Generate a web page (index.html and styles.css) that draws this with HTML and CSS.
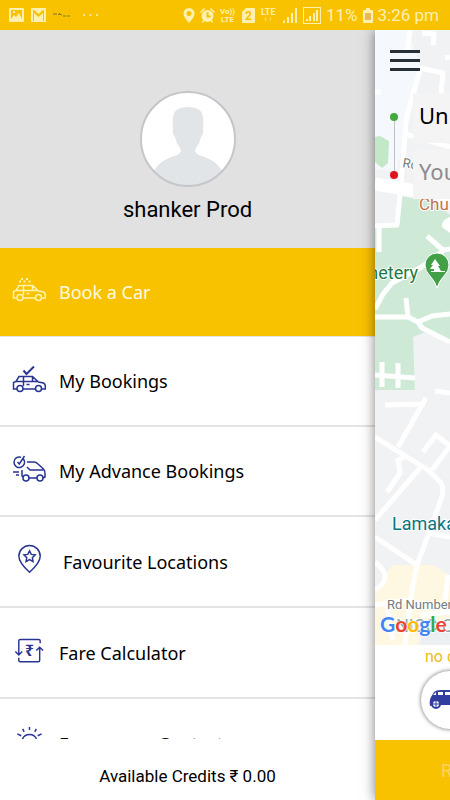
FILE: index.html
```html
<!DOCTYPE html>
<html lang="en">
<head>
<meta charset="utf-8">
<meta name="viewport" content="width=device-width, initial-scale=1">
<title>Menu</title>
<link rel="stylesheet" href="styles.css">
</head>
<body>
<svg class="defs" aria-hidden="true">
  <symbol id="car" viewBox="0 0 34 32">
    <path d="M5 22H1.500V15.500L4 14.500 7 9.500H20.500L26.500 15 31.500 16Q33.300 17 33.300 19V22H29.500M11 22H23.500M4 14.500H26.500M11.500 9.500V19M20.500 9.500V14.500M14.500 17.500H17.500"/>
    <circle cx="8" cy="21.500" r="3"/><circle cx="26.500" cy="21.500" r="3"/>
  </symbol>
</svg>
<div class="phone">
  <header class="status">
    <div class="status-group">
      <svg width="15" height="14" viewBox="0 0 15 14"><path fill-rule="evenodd" d="M1 0H14Q15 0 15 1V13Q15 14 14 14H1Q0 14 0 13V1Q0 0 1 0ZM2 11 5 7 7 9 10 5 13 11V2H2ZM4 3H6V5H4Z"/></svg>
      <svg class="mail" width="15" height="14" viewBox="0 0 15 14"><path fill-rule="evenodd" d="M1 0H14Q15 0 15 1V13Q15 14 14 14H1Q0 14 0 13V1Q0 0 1 0ZM3 13V5L7.500 9 12 5V13H13V2H12L7.500 6 3 2H2V13Z"/></svg>
      <svg class="scribble" width="17" height="6" viewBox="0 0 17 6"><path d="M0 2H4M5 3 7 1M6 2 9 3M10 4H13M14 4H17"/></svg>
      <svg class="dots" width="17" height="4" viewBox="0 0 17 4"><circle cx="2" cy="2" r="1"/><circle cx="8.500" cy="2" r="1"/><circle cx="15" cy="2" r="1"/></svg>
    </div>
    <div class="status-group status-end">
      <svg width="12" height="15" viewBox="0 0 12 15"><path fill-rule="evenodd" d="M6 0A5.500 5.500 0 0 1 11.500 5.500Q11.500 9 6 15 .5 9 .5 5.500A5.500 5.500 0 0 1 6 0ZM6 3A2.500 2.500 0 1 0 6 8 2.500 2.500 0 1 0 6 3Z"/></svg>
      <svg width="15" height="15" viewBox="0 0 15 15"><circle cx="7.500" cy="8" r="6"/><path d="M0 4 4 0 5 1 1 5ZM15 4 11 0 10 1 14 5ZM2 14 4 11 5 12 3 15ZM13 14 11 11 10 12 12 15Z"/><path class="cut" d="M7.500 4.500V8.500H10.500"/></svg>
      <svg width="17" height="16" viewBox="0 0 17 16"><text class="tiny" x="0" y="7">Vo))</text><text class="tiny" x="1" y="15">LTE</text></svg>
      <svg width="14" height="15" viewBox="0 0 14 15"><path d="M4 0H12Q13 0 13 1V14Q13 15 12 15H1Q0 15 0 14V4Z"/><text class="sim" x="3" y="12">2</text></svg>
      <svg width="17" height="16" viewBox="0 0 17 16"><text class="lte" x="0" y="8">LTE</text><path opacity=".5" d="M4 10H5V13H4ZM3 12H6L4.500 14ZM9 11H10V14H9ZM8 12H11L9.500 10Z"/></svg>
      <svg width="15" height="15" viewBox="0 0 15 15"><path d="M0 15V13L2 12V15ZM4 15V9H6V15ZM8 15V5H10V15ZM12 15V0H14V15Z"/></svg>
      <svg width="18" height="17" viewBox="0 0 18 17"><path fill-rule="evenodd" d="M0 0H18V17H0ZM1 1V16H17V1Z"/><path d="M3 14V12H5V14ZM6 14V9H8V14ZM10 14V6H12V14ZM13 14V3H15V14Z"/></svg>
      <span>11%</span>
      <svg width="10" height="15" viewBox="0 0 10 15"><path d="M3 0H7V2H9Q10 2 10 3V14Q10 15 9 15H1Q0 15 0 14V3Q0 2 1 2H3Z"/><path fill="#e8b95a" d="M2 5H8V12H2Z"/></svg>
      <time>3:26 pm</time>
    </div>
  </header>

  <div class="screen">
    <aside class="drawer">
      <section class="profile">
        <svg class="avatar" viewBox="0 0 96 96" role="img" aria-label="Profile photo">
          <circle cx="48" cy="48" r="47" fill="#fff"/>
          <path fill="#e1e5e7" d="M14 80Q20 69 34 65 41 63 41 59L40 57Q36 52 35 46 32 43 33 38 32 28 34 22 37 16 48 16 59 16 62 22 64 28 63 38 64 43 61 46 60 52 56 57L55 59Q55 63 62 65 76 69 82 80 68 95 48 95 28 95 14 80Z"/>
          <circle cx="48" cy="48" r="47" fill="none" stroke="#c5c6ca" stroke-width="2"/>
        </svg>
        <h1>shanker Prod</h1>
      </section>
      <nav class="menu">
        <a class="item active" href="#book">
          <svg class="icon" viewBox="0 0 34 32"><use href="#car" width="34" height="32"/><path stroke-width="2" d="M9 3H11M14 3H16M7 5.500H9M11.500 5.500H13.500M16.500 5.500H18.500"/></svg>
          <span>Book a Car</span>
        </a>
        <a class="item" href="#bookings">
          <svg class="icon" viewBox="0 0 34 32"><use href="#car" y="2" width="34" height="32"/><path stroke-width="2" d="M11.500 5.500 14.500 9 22 1.500"/></svg>
          <span>My Bookings</span>
        </a>
        <a class="item" href="#advance">
          <svg class="icon" viewBox="0 0 34 32"><path d="M11.500 4A5.300 5.300 0 1 1 9 2.200M5.500 7 7.300 9 12.500 1M15 7H22Q24 7 26 9L31.500 14Q33 16 33 19V22L31 23M15 12 18 15H31M10 15V21L11 22M17 23H25M1 17H7M4 20H7"/><circle cx="14" cy="23" r="3"/><circle cx="28" cy="23" r="3"/></svg>
          <span>My Advance Bookings</span>
        </a>
        <a class="item" href="#favourites">
          <svg class="icon wide" viewBox="0 0 38 34"><path d="M17.500 28Q6.500 18 6.500 11.500A11 11 0 0 1 28.500 11.500Q28.500 18 17.500 28Z"/><path d="M17.500 6 19.300 9.700 23.300 10.200 20.400 13 21.100 17 17.500 15 13.900 17 14.600 13 11.700 10.200 15.700 9.700Z"/></svg>
          <span>Favourite Locations</span>
        </a>
        <a class="item" href="#fare">
          <svg class="icon tall" viewBox="0 0 34 34"><path d="M6.500 19V5Q6.500 3.500 8 3.500H27Q28.500 3.500 28.500 5V7.500M3 16 6.500 19.500 10 16M6.500 22.500V25Q6.500 26.500 8 26.500H26.500Q28 26.500 28 25V11.500M24.500 15 28 11.500 31.500 15"/><text x="13" y="21">₹</text></svg>
          <span>Fare Calculator</span>
        </a>
        <a class="item" href="#emergency">
          <svg class="icon tall" viewBox="0 0 34 34"><path d="M17.500 0V3M10.500 2 12 5M24.500 2 23 5M5 7 9 9M30 7 26 9M10 13A8 8 0 0 1 25 13V20H10Z"/></svg>
          <span>Emergency Contacts</span>
        </a>
      </nav>
      <footer class="credits">Available Credits ₹ 0.00</footer>
    </aside>

    <main class="home">
      <section class="map">
        <svg class="map-art" viewBox="0 0 75 615" preserveAspectRatio="xMinYMin slice" role="img" aria-label="Map">
          <path fill="#f0f2f4" d="M0 0H75V615H0Z"/>
          <path fill="#f5f8fc" d="M0 0H33L45 37 22 140H0Z"/>
          <g fill="#ceead6">
            <path d="M25 166 60 172 75 185V312L53 301 38 307 40 360H0V197L22 195Z"/>
            <path fill="#c3e8c8" d="M0 107 5 106 14 111 13 133 7 138 0 132Z"/>
          </g>
          <path fill="#fef8e3" d="M17 535H58L75 546V590L48 593 43 615H0V560Z"/>
          <path fill="#eceff1" d="M48 605 75 598V615H46Z"/>
          <path fill="#fff" d="M75 187Q66 190 67 197L75 203Z"/>
          <g fill="none" stroke="#fff" stroke-width="5" stroke-linejoin="round">
            <path d="M35 0 32 22M47 3 59 4 58 15M70 28 75 27M0 62H6M45 38 68 43 66 63M46 37 33 82 31 93 25 165 22 195 0 196M4 196V222M30 104 75 117"/>
            <path stroke-width="13" d="M0 154 35 160 75 169"/>
            <path d="M52 206 68 220 75 219M68 221 45 238 17 253 8 264 0 279M0 287H33L43 292 57 286 75 284M31 268 33 287M43 292 47 298 75 312M7 332V357M23 333V358M0 345 40 348M60 361 75 363"/>
            <path d="M10 375 50 374M51 368 23 417M0 407 53 440 66 453Q69 458 67 467L42 535 37 560 30 615M48 422 61 405 75 416 57 440M30 427 23 430 25 443 12 462M45 438 0 490M53 503 75 507M0 507 42 535M0 532Q10 540 10 547 9 555 0 560M0 575 32 570M73 545 70 570M12 575 18 610M45 585 75 582"/>
          </g>
          <path fill="#43a047" stroke="#fff" d="M62 258Q60 251 55 246 50 241 50 235A12 12 0 0 1 74 235Q74 241 69 246 64 251 62 258Z"/>
          <path fill="#fff" d="M60 229 65 236H63L66 241H70V242H56V241H59V239L55 239 58 235H56Z"/>
          <g class="labels">
            <text class="road" x="27" y="137" transform="rotate(10 27 137)">Ro</text>
            <text class="church" x="44" y="180">Chu</text>
            <text class="park" x="43" y="249" text-anchor="end">netery</text>
            <text class="place" x="17" y="500">Lamaka</text>
            <text class="road" x="12" y="579">Rd Number</text>
            <text class="faded" x="21" y="602">NICC C</text>
            <text class="google" x="5" y="602"><tspan fill="#4285f4">G</tspan><tspan fill="#ea4335">o</tspan><tspan fill="#fbbc05">o</tspan><tspan fill="#4285f4">g</tspan><tspan fill="#34a853">l</tspan><tspan fill="#ea4335">e</tspan></text>
          </g>
        </svg>
        <div class="controls">
          <button class="burger" type="button" aria-label="Menu"><i></i><i></i><i></i></button>
          <form class="route">
            <div class="trail"><i class="from"></i><i class="line"></i><i class="to"></i></div>
            <div class="fields">
              <input type="text" aria-label="Pickup" value="Un">
              <input type="text" aria-label="Destination" placeholder="You">
            </div>
          </form>
        </div>
      </section>
      <section class="cars">
        <p>no c</p>
        <button class="car-type" type="button" aria-label="Car type">
          <svg width="46" height="24" viewBox="0 0 46 24"><path fill="#303f9f" d="M1 18Q0 12 2 9L5 4Q7 2 12 2H24Q30 3 36 9L44 11 45 18 34 17H7Z"/><path fill="#fff" d="M4 7 7 4V7ZM9 4H14V7H9ZM16 4H23L26 7H16Z"/><circle cx="7" cy="16" r="4" fill="#fff" stroke="#303f9f" stroke-width="2"/><path stroke="#303f9f" d="M3 16H11M7 12V20"/><circle cx="37" cy="16" r="4" fill="#fff" stroke="#303f9f" stroke-width="2"/></svg>
        </button>
      </section>
      <button class="ride" type="button">R</button>
    </main>
  </div>
</div>
</body>
</html>
```
FILE: styles.css
```css
* { box-sizing: border-box; }
body {
  margin: 0;
  font-family: Roboto, "Noto Sans", sans-serif;
  color: #000;
}
button, input { font: inherit; border: 0; padding: 0; margin: 0; }
.defs { position: absolute; width: 0; height: 0; }
.phone {
  height: 100vh;
  display: flex;
  flex-direction: column;
  overflow: hidden;
}

.status {
  flex: none;
  display: flex;
  justify-content: space-between;
  align-items: center;
  height: 30px;
  padding: 0 11px 0 9px;
  background: #f8c200;
  color: #fff0b0;
  fill: #fff0b0;
  font-size: 17px;
}
.status-group { display: flex; align-items: center; gap: 7px; }
.status-end { gap: 5px; }
.status svg { flex: none; }
.scribble { stroke: #8a7430; fill: none; }
.dots { margin-left: 5px; }
.cut { fill: none; stroke: #f8c200; stroke-width: 2; }
.tiny { font-size: 8px; font-weight: 700; }
.lte { font-size: 9px; font-weight: 700; }
.sim { font-size: 12px; font-weight: 700; fill: #f8c200; }

.screen {
  flex: 1;
  min-height: 0;
  display: grid;
  grid-template-columns: 5fr 1fr;
  grid-template-rows: 100%;
}
.drawer {
  min-width: 0;
  display: flex;
  flex-direction: column;
  background: #fff;
}
.profile {
  flex: none;
  display: flex;
  flex-direction: column;
  align-items: center;
  gap: 9px;
  padding: 61px 0 25px;
  background: #e1e1e1;
}
.avatar { width: 96px; height: 96px; }
.profile h1 {
  margin: 0;
  font-size: 22px;
  line-height: 27px;
  font-weight: 400;
}
.menu { flex: 1; min-height: 0; overflow: hidden; }
.item {
  display: flex;
  align-items: center;
  gap: 13px;
  padding: 28px 12px;
  border-bottom: 2px solid #e4e4e4;
  color: #000;
  font-family: "Noto Sans", sans-serif;
  font-size: 18px;
  line-height: 24px;
  text-decoration: none;
}
.active {
  background: #f8c200;
  border-bottom-width: 1px;
  color: #fffbe0;
}
.icon {
  flex: none;
  width: 34px;
  height: 32px;
  overflow: visible;
  fill: none;
  stroke: #283593;
  stroke-width: 1.5;
}
.icon text { fill: #283593; stroke: none; font-size: 16px; font-weight: 700; }
.active .icon { stroke: #fff3b0; }
.wide { width: 38px; height: 33px; }
.tall { height: 33px; }
.credits {
  flex: none;
  padding: 27px 0 14px;
  font-size: 17px;
  line-height: 20px;
  text-align: center;
}

.home {
  position: relative;
  min-width: 0;
  display: flex;
  flex-direction: column;
  background: #fff;
  box-shadow: 0 0 12px rgba(0, 0, 0, .5);
  clip-path: inset(0 0 0 -20px);
}
.map { position: relative; flex: 1; min-height: 0; overflow: hidden; }
.map-art { position: absolute; inset: 0; width: 100%; height: 100%; }
.labels text { paint-order: stroke; stroke: #fff; stroke-width: 2; stroke-linejoin: round; }
.road { font-size: 13px; fill: #757b80; }
.church { font-size: 17px; fill: #c5714b; }
.park { font-size: 18px; fill: #1b7a43; }
.place { font-size: 18px; fill: #0b7480; }
.faded { font-size: 18px; fill: #8ba5a0; }
.labels .google { font-family: Lato, sans-serif; font-weight: 700; font-size: 21px; stroke-width: 1; }
.controls { position: relative; padding: 20px 0 0 15px; }
.burger {
  display: flex;
  flex-direction: column;
  gap: 6px;
  width: 30px;
  background: none;
}
.burger i { width: 100%; height: 3px; background: #263036; }
.route { display: flex; gap: 15px; padding-top: 22px; }
.trail {
  flex: none;
  display: flex;
  flex-direction: column;
  align-items: center;
  width: 8px;
  padding: 20px 0;
}
.from, .to { width: 8px; height: 8px; border-radius: 50%; background: #43a83f; }
.to { background: #e0131e; }
.line { flex: 1; width: 1px; background: #c0c0c0; }
.fields { flex: 1; min-width: 0; display: grid; gap: 6px; }
.fields input {
  width: 100%;
  height: 50px;
  padding: 0 0 6px 6px;
  background: #f4f4f5;
  color: #000;
  font-family: "Noto Sans", sans-serif;
  font-size: 22px;
}
.fields input::placeholder { color: #8c8c8c; opacity: 1; }
.cars {
  flex: none;
  display: flex;
  flex-direction: column;
  gap: 4px;
  height: 95px;
  padding: 2px 0 0 46px;
  overflow: hidden;
}
.cars p { margin: 0 0 0 4px; color: #eebd15; font-size: 16px; line-height: 20px; white-space: nowrap; }
.car-type {
  flex: none;
  display: flex;
  align-items: center;
  width: 58px;
  height: 58px;
  padding-left: 8px;
  border-radius: 50%;
  background: #fff;
  box-shadow: 0 0 4px rgba(0, 0, 0, .6);
}
.car-type svg { flex: none; }
.ride {
  flex: none;
  height: 60px;
  padding-left: 66px;
  background: #f8c200;
  color: #fad460;
  font-size: 18px;
  text-align: left;
}
```
